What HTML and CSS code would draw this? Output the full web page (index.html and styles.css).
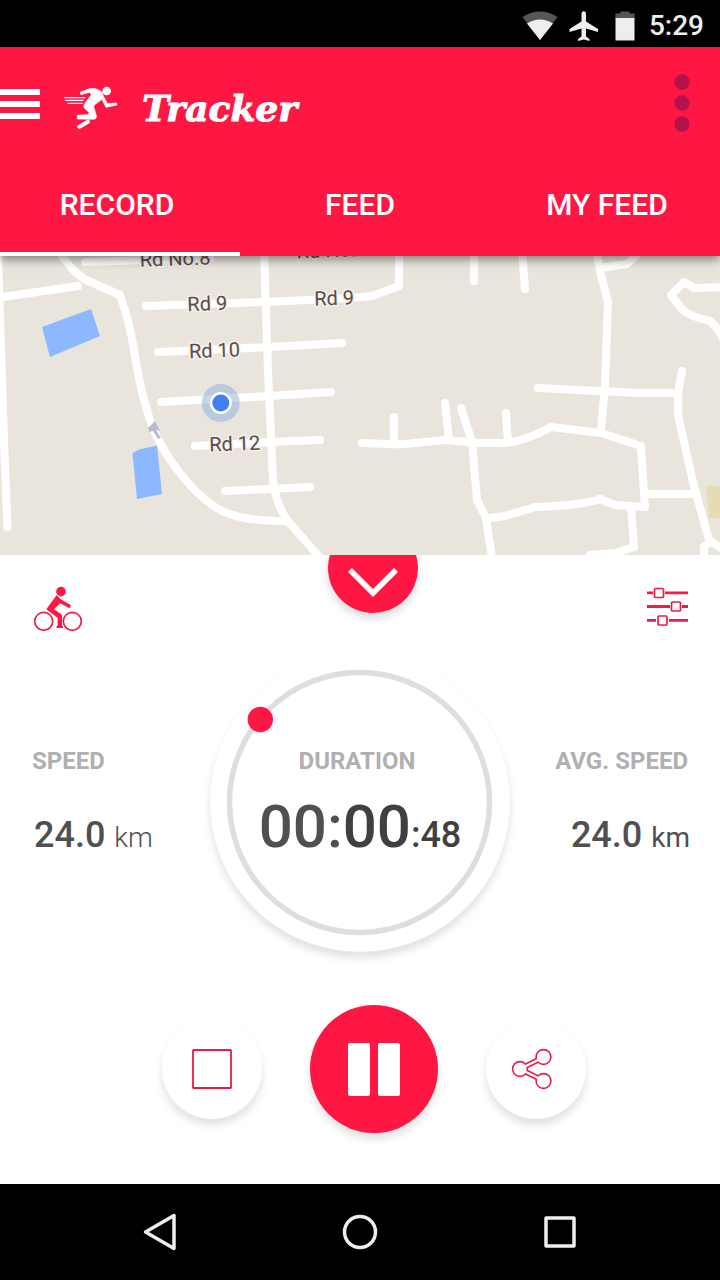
FILE: index.html
```html
<!DOCTYPE html>
<html lang="en">
<head>
<meta charset="utf-8">
<meta name="viewport" content="width=device-width, initial-scale=1">
<title>Tracker</title>
<link rel="stylesheet" href="styles.css">
</head>
<body>
<div class="app">
  <div class="status-bar">
    <svg class="status-wifi" viewBox="0 0 36 30" width="36" height="30" aria-hidden="true">
      <path d="M0.500 6 Q18 -5 35.500 6 L18 29 Z" fill="#565656"/>
      <path d="M5 12.500 Q18 4.500 31 12.500 L18 29 Z" fill="#eee"/>
    </svg>
    <svg class="status-plane" viewBox="0 0 30 30" width="30" height="30" aria-hidden="true">
      <path d="M29 21v-3L17 10.500V2.500a2.200 2.200 0 0 0-4.500 0v8L0.500 18v3l12-3.500v8l-3.500 2.500v2l5.700-1.500 5.800 1.500v-2L17 25.500v-8z" fill="#eee"/>
    </svg>
    <svg class="status-battery" viewBox="0 0 20 30" width="20" height="30" aria-hidden="true">
      <path d="M0.500 2.500h5V0.500h9v2h5V8H.5z" fill="#565656"/>
      <path d="M.5 7h19v22.500H.5z" fill="#eee"/>
    </svg>
    <time class="status-time">5:29</time>
  </div>

  <header class="app-header">
    <div class="toolbar">
      <button class="menu-button" type="button" aria-label="Menu">
        <svg viewBox="0 0 40 32" width="40" height="32"><path d="M0 4h40M0 16h40M0 28h40" stroke="#fff" stroke-width="6"/></svg>
      </button>
      <svg class="runner" viewBox="192 72 168 138" width="56" height="46" aria-hidden="true">
        <path d="M240 97L272 85Q292 84 306 97L310 108L322 131L350 129L351 135L318 142L306 118L284 134L281 140L290 170Q288 178 280 178L232 177V166L264 164L268 158L252 143Q250 136 256 128L274 104L268 97L243 104Z" fill="#fff" stroke="#fff" stroke-width="2" stroke-linejoin="round"/>
        <path d="M264 185L238 200" fill="none" stroke="#fff" stroke-width="12" stroke-linecap="round"/>
        <path d="M192 113H256M196 121H251M202 130H248" stroke="#fff" stroke-width="4"/>
        <circle cx="320" cy="93" r="13" fill="#fff"/>
      </svg>
      <h1 class="brand">Tracker</h1>
      <button class="more-button" type="button" aria-label="More options">
        <svg viewBox="0 0 16 60" width="16" height="60" fill="#b3134a"><circle cx="8" cy="8" r="7.700"/><circle cx="8" cy="29" r="7.700"/><circle cx="8" cy="50" r="7.700"/></svg>
      </button>
    </div>
    <nav class="tabs" aria-label="Sections">
      <a class="tab tab-record" href="#record" aria-current="page">RECORD</a>
      <a class="tab" href="#feed">FEED</a>
      <a class="tab tab-mine" href="#my-feed">MY FEED</a>
    </nav>
  </header>

  <main class="content">
    <div class="map">
      <svg class="map-canvas" viewBox="0 256 720 299" preserveAspectRatio="xMidYMid slice" role="img" aria-label="Map">
        <path d="M0 256H720V555H0z" fill="#e9e5dd"/>
        <path d="M706 486h14v32h-11z" fill="#e6dcb4"/>
        <path d="M42 327L91 309L100 336L50 357z" fill="#8cb8ff"/>
        <path d="M132.500 453L139 449.500L157 445.500L162 494L137 499z" fill="#8cb8ff"/>
        <g fill="none" stroke="#fff" stroke-width="8" stroke-linecap="round" stroke-linejoin="round">
          <path d="M-2 256L4 440L7.500 527"/>
          <path d="M-4 298L78 286"/>
          <path d="M58 250Q72 272 86 280L120 295Q129 320 134 350Q140 388 147 410Q154 438 176 468Q198 498 222 511Q244 521 285 521"/>
          <path d="M264 250L268 370L273 480Q275 502 287 520L322 560"/>
          <path d="M146 306L264 302L350 298L372 296L399 286V250"/>
          <path d="M85 262L210 258"/>
          <path d="M158 352L270 347L342 343"/>
          <path d="M161 402L270 396L331 392"/>
          <path d="M195 446L270 442L320 440"/>
          <path d="M225 491L310 487"/>
          <path d="M474 250V281"/>
          <path d="M522 250L525 289"/>
          <path d="M596 250L601 275L608 302L605 385L601 431"/>
          <path d="M600 268L627 264L640 252"/>
          <path d="M724 287L694 288L684 282L671 295L682 309Q690 317 710 321Q718 327 724 340"/>
          <path d="M538 388L640 393H676"/>
          <path d="M682 371L678 393V415L693 482L709 540L722 549M704 560V546L710 543"/>
          <path d="M362 443L400 444.500L445 440L480 443H505Q526 441 551 427L601 433L641 446L645 507L615 505L600 499Q585 505 535 507L505 516L489 518"/>
          <path d="M394 417V442M445 403L449 440M506 413L508 442"/>
          <path d="M461 408L472 442L477 500L486 518L492 558"/>
          <path d="M648 494H693"/>
          <path d="M631 507L634 547L615 553L590 555"/>
        </g>
        <path d="M148 428L155 421L160 431L156 430L161 438L158 439L153 431L149 432z" fill="#b9bccd"/>
        <g class="map-label" transform="rotate(-2 250 350)">
          <text x="143" y="263">Rd No.8</text>
          <text x="300" y="260">Rd No.9</text>
          <text x="189" y="309">Rd 9</text>
          <text x="316" y="308">Rd 9</text>
          <text x="189" y="356">Rd 10</text>
          <text x="206" y="450">Rd 12</text>
        </g>
        <circle cx="220.800" cy="403" r="19" fill="#8eaee0" fill-opacity=".5"/>
        <circle cx="220.800" cy="403" r="11" fill="#fff"/>
        <circle cx="220.800" cy="403" r="8.500" fill="#4080f4"/>
      </svg>
    </div>

    <section class="panel">
      <div class="panel-top">
        <button class="icon-button" type="button" aria-label="Activity: cycling">
          <svg viewBox="99 105 150 144" width="50" height="48">
            <g fill="none" stroke="#f01b47" stroke-width="5">
              <circle cx="131" cy="214" r="27"/>
              <circle cx="217" cy="214" r="27"/>
            </g>
            <circle cx="183" cy="125" r="14.500" fill="#ff1744"/>
            <path d="M170 135L182 148L213 166L209 175L180 160L162 178L186 194V228H189V234H170V228H173V203L139 178Z" fill="#ff1744"/>
          </svg>
        </button>
        <button class="icon-button" type="button" aria-label="Settings">
          <svg viewBox="646 585 44 42" width="44" height="42">
            <g fill="none" stroke="#ee1c45" stroke-width="2.800">
              <path d="M647 592.800H653M665 592.800H688M647 606.500H670M682 606.500H688M647 620.300H656M669 620.300H688"/>
              <g fill="#fff" stroke-width="1.700"><rect x="654.500" y="588.500" width="9" height="9" rx="1"/><rect x="671.500" y="602" width="9" height="9" rx="1"/><rect x="658" y="616" width="9" height="9" rx="1"/></g>
            </g>
          </svg>
        </button>
      </div>
      <div class="collapse-clip">
        <button class="collapse-button" type="button" aria-label="Collapse map">
          <svg viewBox="0 0 50 30" width="50" height="30"><path d="M2 2L25 25L48 2" fill="none" stroke="#fff" stroke-width="5.500"/></svg>
        </button>
      </div>

      <div class="stats">
        <div class="stat">
          <h2 class="stat-label">SPEED</h2>
          <p class="stat-value">24.0 <span class="unit unit-light">km</span></p>
        </div>
        <div class="dial">
          <svg class="dial-ring" viewBox="0 0 300 300" aria-hidden="true">
            <circle cx="149.500" cy="150.500" r="130" fill="none" stroke="#dedede" stroke-width="5.500"/>
            <circle cx="50.300" cy="67.500" r="12.700" fill="#ff1744"/>
          </svg>
          <div class="dial-text">
            <h2 class="stat-label">DURATION</h2>
            <p class="duration">00:<span class="minutes">00</span><span class="seconds">:48</span></p>
          </div>
        </div>
        <div class="stat stat-right">
          <h2 class="stat-label">AVG. SPEED</h2>
          <p class="stat-value">24.0 <span class="unit">km</span></p>
        </div>
      </div>

      <div class="controls">
        <button class="round-button" type="button" aria-label="Stop">
          <svg viewBox="0 0 42 42" width="42" height="42"><rect x="2" y="2" width="38" height="38" rx="0.500" fill="none" stroke="#e81c47" stroke-width="1.800"/></svg>
        </button>
        <button class="round-button pause-button" type="button" aria-label="Pause">
          <svg viewBox="0 0 52 53" width="52" height="53" fill="#fff"><rect width="22" height="53" rx="2"/><rect x="30" width="22" height="53" rx="2"/></svg>
        </button>
        <button class="round-button" type="button" aria-label="Share">
          <svg class="share-icon" viewBox="0 0 42 42" width="42" height="42">
            <path d="M9 21L33 9M9 21L33 33" fill="none" stroke="#e81c47" stroke-width="5.500"/>
            <g fill="#e81c47"><circle cx="9" cy="21" r="8.200"/><circle cx="32.500" cy="9" r="8.200"/><circle cx="32.500" cy="33" r="8.200"/></g>
            <path d="M9 21L33 9M9 21L33 33" fill="none" stroke="#fff" stroke-width="2.500"/>
            <g fill="#fff"><circle cx="9" cy="21" r="6.600"/><circle cx="32.500" cy="9" r="6.600"/><circle cx="32.500" cy="33" r="6.600"/></g>
          </svg>
        </button>
      </div>
    </section>
  </main>

  <nav class="system-nav" aria-label="System">
    <button class="system-button" type="button" aria-label="Back"><svg viewBox="0 0 40 40" width="40" height="40"><path d="M34 3.500V36.500L5.500 20z"/></svg></button>
    <button class="system-button" type="button" aria-label="Home"><svg viewBox="0 0 40 40" width="40" height="40"><circle cx="20" cy="20" r="15.500"/></svg></button>
    <button class="system-button" type="button" aria-label="Recent apps"><svg viewBox="0 0 40 40" width="40" height="40"><rect x="6" y="6" width="28" height="28"/></svg></button>
  </nav>
</div>
</body>
</html>
```
FILE: styles.css
```css
* {
  box-sizing: border-box;
}

body {
  margin: 0;
  background: #fff;
  color: #444;
  font-family: Roboto, "Noto Sans", sans-serif;
}

h1, h2, p {
  margin: 0;
}

button {
  margin: 0;
  padding: 0;
  border: 0;
  background: none;
  cursor: pointer;
}

svg {
  display: block;
}

.app {
  display: flex;
  flex-direction: column;
  min-height: 100vh;
}

.status-bar {
  display: flex;
  align-items: center;
  justify-content: flex-end;
  height: 47px;
  padding: 4px 16px 0 0;
  background: #000;
  color: #eee;
}

.status-plane {
  margin: 0 16px 0 11px;
}

.status-time {
  margin-left: 14px;
  font-size: 28px;
  font-weight: 500;
  line-height: 32px;
}

.app-header {
  position: relative;
  z-index: 1;
  background: #ff1744;
  box-shadow: 0 3px 10px rgba(0, 0, 0, .5);
}

.toolbar {
  display: flex;
  align-items: center;
  height: 113px;
  padding-right: 30px;
}

.menu-button {
  margin-right: 24px;
}

.runner {
  margin-top: 6px;
}

.brand {
  margin: 8px 0 0 22px;
  color: #fff;
  font: italic bold 36px/44px "DejaVu Serif", serif;
  -webkit-text-stroke: 1px #fff;
}

.more-button {
  margin-left: auto;
}

.tabs {
  display: grid;
  grid-template-columns: repeat(3, 1fr);
}

.tab {
  height: 96px;
  padding-top: 27px;
  border-bottom: 4px solid transparent;
  color: #fff;
  font-size: 30px;
  font-weight: 500;
  line-height: 36px;
  text-align: center;
  text-decoration: none;
}

.tab[aria-current] {
  border-color: #fff;
}

.tab-record {
  padding-right: 6px;
}

.tab-mine {
  padding-left: 14px;
}

.content {
  display: flex;
  flex: 1;
  flex-direction: column;
}

.map-canvas {
  width: 100%;
  height: 299px;
}

.map-label {
  fill: #5d4a4a;
  stroke: #f4f1ec;
  stroke-width: 3px;
  paint-order: stroke;
  font-size: 20px;
}

.panel {
  position: relative;
  flex: 1;
  padding-bottom: 51px;
}

.panel-top {
  display: flex;
  justify-content: space-between;
  height: 97px;
  padding: 30px 30px 0 33px;
}

.icon-button {
  align-self: flex-start;
}

.collapse-clip {
  position: absolute;
  top: 0;
  right: 0;
  left: 26px;
  display: flex;
  justify-content: center;
  height: 76px;
  overflow: hidden;
  pointer-events: none;
}

.collapse-button {
  display: grid;
  flex: none;
  justify-items: center;
  align-content: end;
  width: 90px;
  height: 90px;
  margin-top: -32px;
  padding-bottom: 15px;
  border-radius: 50%;
  background: #ff1744;
  box-shadow: 0 5px 8px rgba(0, 0, 0, .15);
  pointer-events: auto;
}

.stats {
  display: grid;
  grid-template-columns: 1fr 300px 1fr;
}

.stat {
  padding: 94px 0 0 32px;
}

.stat-right {
  padding: 94px 32px 0 0;
  text-align: right;
}

.stat-label {
  color: #b0b0b0;
  font-size: 24px;
  font-weight: 700;
  line-height: 30px;
}

.stat-value {
  margin: 37px -2px 0 2px;
  color: #505050;
  font-size: 36px;
  font-weight: 500;
  line-height: 44px;
  white-space: nowrap;
}

.unit {
  font-size: 28px;
  font-weight: 400;
}

.unit-light {
  font-weight: 300;
}

.dial {
  display: grid;
  border-radius: 50%;
  background: #fff;
  box-shadow: 0 6px 8px rgba(0, 0, 0, .12);
}

.dial-ring,
.dial-text {
  grid-area: 1 / 1;
}

.dial-text {
  padding-top: 94px;
  text-align: center;
}

.dial-text .stat-label {
  padding-right: 6px;
}

.duration {
  margin-top: 15px;
  color: #505050;
  font-size: 60px;
  font-weight: 500;
  line-height: 72px;
  white-space: nowrap;
}

.minutes,
.seconds {
  color: #404040;
}

.seconds {
  font-size: 36px;
}

.controls {
  display: flex;
  align-items: center;
  justify-content: center;
  gap: 48px;
  margin-top: 53px;
  padding-left: 28px;
}

.round-button {
  display: grid;
  place-items: center;
  width: 100px;
  height: 100px;
  border-radius: 50%;
  background: #fff;
  box-shadow: 0 6px 8px rgba(0, 0, 0, .12);
}

.pause-button {
  width: 128px;
  height: 128px;
  background: #ff1744;
}

.share-icon {
  margin-right: 8px;
}

.system-nav {
  display: flex;
  justify-content: center;
  gap: 160px;
  height: 96px;
  background: #000;
}

.system-button svg {
  fill: none;
  stroke: #eee;
  stroke-width: 3.500;
  stroke-linejoin: round;
}
```
